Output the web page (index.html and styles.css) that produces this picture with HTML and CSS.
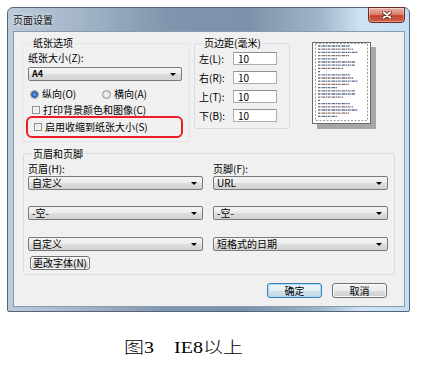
FILE: index.html
```html
<!DOCTYPE html>
<html lang="zh-CN">
<head>
    <meta charset="utf-8">
    <title>页面设置</title>
    <link rel="stylesheet" href="styles.css">
</head>
<body>

<div class="window">
    <div class="titlebar">
        <span class="title">页面设置</span>
        <span class="close">
            <svg width="10" height="8" viewBox="0 0 10 8">
                <path d="M1.5 1.3 L8.5 6.7 M8.5 1.3 L1.5 6.7" stroke="#5b2a22" stroke-width="3.4" stroke-linecap="round"/>
                <path d="M1.5 1.3 L8.5 6.7 M8.5 1.3 L1.5 6.7" stroke="#fff" stroke-width="1.8" stroke-linecap="round"/>
            </svg>
        </span>
    </div>

    <div class="client">
        <div class="top">
            <fieldset class="group paper">
                <legend>纸张选项</legend>
                <div class="label">纸张大小(Z):</div>
                <div class="combo paper-size">A4</div>
                <div class="radios">
                    <span class="opt"><i class="radio on"></i>纵向(O)</span>
                    <span class="opt"><i class="radio"></i>横向(A)</span>
                </div>
                <div class="check"><i class="box"></i>打印背景颜色和图像(C)</div>
                <div class="mark">
                    <div class="check"><i class="box"></i>启用收缩到纸张大小(S)</div>
                </div>
            </fieldset>

            <fieldset class="group margins">
                <legend>页边距(毫米)</legend>
                <div class="mrow"><span class="mlabel">左(L):</span><span class="field">10</span></div>
                <div class="mrow"><span class="mlabel">右(R):</span><span class="field">10</span></div>
                <div class="mrow"><span class="mlabel">上(T):</span><span class="field">10</span></div>
                <div class="mrow"><span class="mlabel">下(B):</span><span class="field">10</span></div>
            </fieldset>

            <div class="preview">
                <svg width="57" height="80" viewBox="0 0 57 80">
                    <rect x="2.5" y="0.5" width="52" height="77" fill="none" stroke="#9c9c9c" stroke-dasharray="2 1.5"/>
                    <g stroke-width="1.3" stroke-dasharray="2 0.6 1 0.6 3 0.6 1.5 0.6">
                        <path d="M5 3H37" stroke="#5a6b93"/>
                        <path d="M5 6.2H40" stroke="#7a6a72"/>
                        <path d="M5 9.4H45" stroke="#5a6b93"/>
                        <path d="M5 12.6H36" stroke="#8a6a5a"/>
                        <path d="M5 15.8H24" stroke="#5a6b93"/>
                        <path d="M5 19H42" stroke="#6a6f80"/>
                        <path d="M5 22.2H42" stroke="#5a6b93"/>
                        <path d="M5 25.4H30" stroke="#7a6a72"/>
                        <path d="M5 28.6H7" stroke="#5a6b93"/>
                        <path d="M5 31.8H37" stroke="#5a6b93"/>
                        <path d="M5 35H40" stroke="#7a6a72"/>
                        <path d="M5 38.2H45" stroke="#5a6b93"/>
                        <path d="M5 41.4H36" stroke="#8a6a5a"/>
                        <path d="M5 44.6H24" stroke="#5a6b93"/>
                        <path d="M5 47.8H42" stroke="#6a6f80"/>
                        <path d="M5 51H42" stroke="#5a6b93"/>
                        <path d="M5 54.2H30" stroke="#7a6a72"/>
                        <path d="M5 57.4H7" stroke="#5a6b93"/>
                        <path d="M5 60.6H37" stroke="#5a6b93"/>
                        <path d="M5 63.8H40" stroke="#7a6a72"/>
                        <path d="M5 67H45" stroke="#5a6b93"/>
                        <path d="M5 70.2H36" stroke="#8a6a5a"/>
                        <path d="M5 73.4H24" stroke="#5a6b93"/>
                    </g>
                </svg>
            </div>
        </div>

        <fieldset class="group hf">
            <legend>页眉和页脚</legend>
            <div class="hf-grid">
                <div class="label">页眉(H):</div>
                <div class="label">页脚(F):</div>
                <div class="combo r1">自定义</div>
                <div class="combo r1">URL</div>
                <div class="combo r2">-空-</div>
                <div class="combo r2">-空-</div>
                <div class="combo r3">自定义</div>
                <div class="combo r3">短格式的日期</div>
            </div>
            <div class="btn font-btn">更改字体(N)</div>
        </fieldset>

        <div class="actions">
            <span class="btn default">确定</span>
            <span class="btn">取消</span>
        </div>
    </div>
</div>

<p class="caption"><span class="wide"><span class="fig">图3</span>IE8以上</span></p>

</body>
</html>
```

FILE: styles.css
```css
* {
    box-sizing: border-box;
}

body {
    margin: 0;
    background: #fff;
    font-family: "Noto Sans CJK SC", sans-serif;
    color: #000;
}

.window {
    width: 403px;
    height: 305px;
    margin: 7px 0 0 7px;
    border: 1px solid #56657a;
    border-radius: 6px 6px 2px 2px;
    background: linear-gradient(to right, #bccbda 0%, #a3b5c8 18%, #7f95ad 40%, #7c92aa 60%, #9fb6cb 78%, #cfe4f4 88%, #c3dff4 100%);
    display: flex;
    flex-direction: column;
}

.titlebar {
    height: 23px;
    display: flex;
    justify-content: space-between;
    align-items: flex-start;
}

.title {
    align-self: center;
    padding-left: 5px;
    font-size: 10px;
    line-height: 12px;
    color: #111;
    text-shadow: 0 0 4px #fff;
}

.close {
    width: 37px;
    height: 16px;
    margin: -1px 4px 0 0;
    border: 1px solid #6b2c22;
    border-radius: 0 0 4px 4px;
    background: linear-gradient(#eab3a6 0%, #d98370 45%, #c5432d 55%, #d0634c 100%);
    box-shadow: inset 0 0 0 1px rgba(255, 255, 255, 0.35);
    display: flex;
    align-items: center;
    justify-content: center;
}

.client {
    flex: 1;
    margin: 0 4px 4px 5px;
    border: 1px solid #8a99ab;
    background: #f0f0f0;
    font-size: 10px;
    line-height: 12px;
}

.top {
    display: flex;
    align-items: flex-start;
    margin: 6px 0 0 8px;
}

.group {
    margin: 0;
    padding: 0;
    min-width: 0;
    border: 1px solid #d5dde4;
    border-radius: 3px;
}

.group legend {
    padding: 0 2px;
    margin-left: 3px;
    font-size: 10px;
    line-height: 10px;
}

.paper {
    width: 168px;
    height: 104px;
    padding: 0 5px;
    border-color: #e2e6ea;
}

.label {
    margin-top: 4px;
}

.combo {
    height: 14px;
    border: 1px solid #7a7a7a;
    border-radius: 2px;
    background: linear-gradient(#f4f4f4 0%, #ececec 50%, #dedede 50%, #d2d2d2 100%);
    display: flex;
    align-items: center;
    justify-content: space-between;
    padding: 0 5px 0 3px;
    white-space: nowrap;
}

.combo::after {
    content: "";
    border-left: 3px solid transparent;
    border-right: 3px solid transparent;
    border-top: 3px solid #000;
}

.paper-size {
    width: 154px;
    margin-top: 3px;
    font-size: 9px;
    font-weight: bold;
}

.radios {
    display: flex;
    margin-top: 7px;
    padding-left: 2px;
}

.opt {
    width: 72px;
    display: flex;
    align-items: center;
}

.radio {
    width: 9px;
    height: 9px;
    margin-right: 3px;
    border: 1px solid #8e8f8f;
    border-radius: 50%;
    background: radial-gradient(#f4f4f4, #d8d8d8);
}

.radio.on {
    background: radial-gradient(circle, #7ab8f0 0, #2c6fc4 2px, #1f56a8 3px, #e6e6e6 3.5px, #f4f4f4 100%);
}

.check {
    display: flex;
    align-items: center;
    margin-top: 4px;
    padding-left: 4px;
}

.box {
    width: 8px;
    height: 8px;
    margin-right: 3px;
    border: 1px solid #8e8f8f;
    background: linear-gradient(135deg, #dcdcdc, #fbfbfb);
    box-shadow: inset 0 0 0 1px #f4f4f4;
}

.mark {
    width: 157px;
    margin: 0 0 0 -2px;
    padding: 3px 0 3px 2px;
    border: 2px solid #ee1c24;
    border-radius: 6px;
}

.mark .check {
    margin-top: 0;
}

.margins {
    width: 96px;
    height: 91px;
    margin-left: 4px;
    padding: 0 4px 0 4px;
}

.mrow {
    display: flex;
    align-items: center;
    margin-top: 6px;
}

.mrow:first-of-type {
    margin-top: 4px;
}

.mlabel {
    width: 34px;
}

.field {
    width: 44px;
    height: 13px;
    padding-left: 4px;
    border: 1px solid #abadb3;
    border-top-color: #8e9199;
    background: #fff;
    line-height: 11px;
}

.preview {
    margin: 4px 0 0 22px;
    width: 59px;
    height: 82px;
    border: 1px solid #6b6b6b;
    background: #fff;
    box-shadow: 5px 5px 0 #a6a6a6;
}

.preview svg {
    display: block;
}

.hf {
    width: 372px;
    margin: 7px 0 0 9px;
    padding: 0 6px 4px 4px;
}

.hf legend {
    line-height: 9px;
}

.hf-grid {
    display: grid;
    grid-template-columns: 175px 175px;
    column-gap: 10px;
}

.hf-grid .label {
    margin-top: 4px;
    line-height: 13px;
}

.r1 {
    margin-top: 1px;
}

.r2 {
    margin-top: 16px;
}

.r3 {
    margin-top: 17px;
}

.btn {
    height: 15px;
    width: 55px;
    border: 1px solid #707070;
    border-radius: 3px;
    background: linear-gradient(#f2f2f2 0%, #ebebeb 50%, #dddddd 50%, #cfcfcf 100%);
    box-shadow: inset 0 0 0 1px #fcfcfc;
    display: flex;
    align-items: center;
    justify-content: center;
    white-space: nowrap;
}

.font-btn {
    width: 60px;
    height: 14px;
    margin: 5px 0 0 2px;
}

.actions {
    display: flex;
    justify-content: flex-end;
    gap: 10px;
    margin-top: 8px;
    padding-right: 17px;
}

.btn.default {
    border-color: #3c7fb1;
    background: linear-gradient(#eef6fb 0%, #e1edf5 50%, #d2e2ee 50%, #c6d9e8 100%);
    box-shadow: inset 0 0 0 1px #a8dcf6;
}

.caption {
    margin: 28px 0 0 0;
    padding-left: 124px;
    font-family: "Liberation Serif", "Noto Sans CJK SC", serif;
    font-size: 16px;
    font-weight: 300;
    line-height: 16px;
}

.wide {
    display: inline-block;
    transform: scaleX(1.25);
    transform-origin: left center;
}

.fig {
    margin-right: 16px;
}
```
